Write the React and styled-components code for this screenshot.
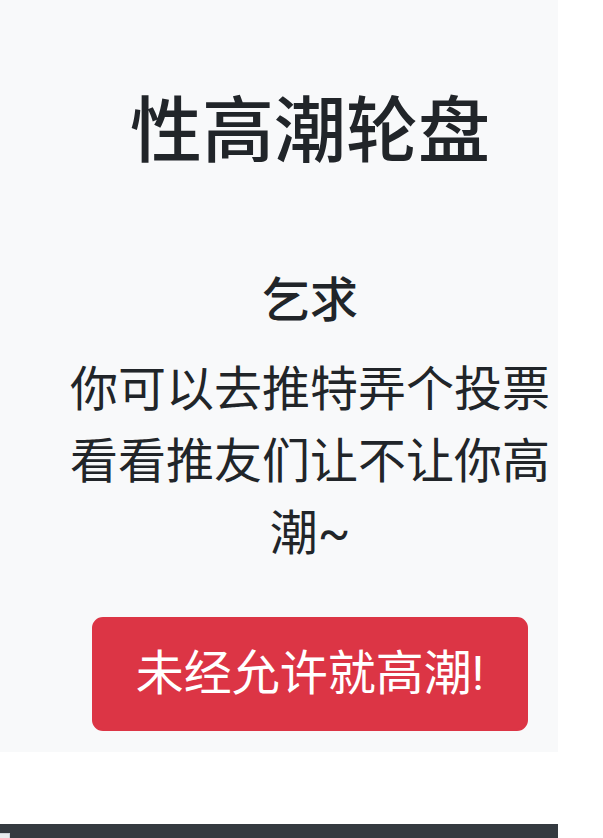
import React from "react";
import styled, { createGlobalStyle } from "styled-components";

const GlobalStyle = createGlobalStyle`
  html, body {
    margin: 0;
    padding: 0;
    background: #ffffff;
  }
  body {
    font-family: Roboto, "Noto Sans CJK SC", "Noto Sans", sans-serif;
    color: #212529;
    overflow: hidden;
  }
  * { box-sizing: border-box; }
`;

const Page = styled.div`
  display: flex;
  flex-direction: column;
  width: 603px;
  min-height: 838px;
`;

const Jumbotron = styled.section`
  width: 558px;
  background: #f8f9fa;
  padding: 89px 0 21px 62px;
`;

const Content = styled.div`
  display: flex;
  flex-direction: column;
  align-items: center;
  text-align: center;
  font-family: Roboto, "Noto Sans CJK SC", sans-serif;
`;

const Title = styled.h1`
  margin: 0 0 96.6px;
  font-size: 72px;
  font-weight: 500;
  line-height: 1.2;
  color: #212529;
`;

const Subtitle = styled.h5`
  margin: 0 0 24.4px;
  font-size: 48px;
  font-weight: 500;
  line-height: 1.2;
  color: #212529;
`;

const Lead = styled.p`
  margin: 0 0 47px;
  font-size: 48px;
  font-weight: 400;
  line-height: 1.5;
  color: #212529;
`;

const DangerButton = styled.button`
  display: inline-block;
  font-family: inherit;
  font-size: 48px;
  font-weight: 400;
  line-height: 1.5;
  color: #ffffff;
  background: #dc3545;
  border: 2px solid #dc3545;
  border-radius: 11px;
  padding: 19px 41.5px;
  cursor: pointer;
`;

const Footer = styled.footer`
  margin-top: 72px;
  width: 558px;
  height: 60px;
  background: #343a40;
  padding-top: 9px;
`;

const FooterTab = styled.div`
  width: 10px;
  height: 20px;
  background: #e9ecef;
  border: 1px solid #ced4da;
  border-left: none;
`;

export default function App() {
  return (
    <>
      <GlobalStyle />
      <Page>
        <Jumbotron>
          <Content>
            <Title>性高潮轮盘</Title>
            <Subtitle>乞求</Subtitle>
            <Lead>你可以去推特弄个投票看看推友们让不让你高潮~</Lead>
            <DangerButton type="button">未经允许就高潮!</DangerButton>
          </Content>
        </Jumbotron>
        <Footer>
          <FooterTab />
        </Footer>
      </Page>
    </>
  );
}
